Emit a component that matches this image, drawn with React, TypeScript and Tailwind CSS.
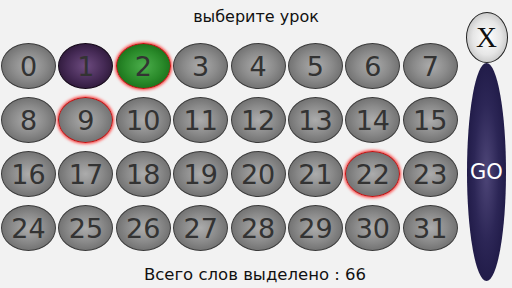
import React from "react";

const FONT = { fontFamily: '"DejaVu Sans", "Noto Sans", sans-serif' };

const GRAY =
  "border-[#3a3a3a] bg-[radial-gradient(ellipse_at_center,#acacac_0%,#8a8a8a_45%,#5a5a5a_100%)]";
const PURPLE =
  "border-[#140818] bg-[radial-gradient(ellipse_at_center,#6e4c80_0%,#452a55_50%,#1a0a22_100%)]";
const GREEN =
  "border-[#c81010] bg-[radial-gradient(ellipse_at_center,#4cae4c_0%,#2a8a2a_50%,#0c5a0c_100%)] shadow-[0_0_3px_1px_#ff4040]";
const MARKED =
  "border-[#c81010] shadow-[0_0_3px_1px_#ff4040] bg-[radial-gradient(ellipse_at_center,#acacac_0%,#8a8a8a_45%,#5a5a5a_100%)]";

function Lesson({ n }: { n: number }) {
  let cls = GRAY;
  if (n === 1) cls = PURPLE;
  else if (n === 2) cls = GREEN;
  else if (n === 9 || n === 22) cls = MARKED;

  return (
    <div
      className={`w-[55px] h-[46px] rounded-[50%] border flex items-center justify-center text-[27px] text-[#333] leading-none ${cls}`}
    >
      {n}
    </div>
  );
}

export default function App() {
  const lessons = Array.from({ length: 32 }, (_, i) => i);

  return (
    <div
      className="w-[512px] h-[288px] bg-[#f2f2f2] grid grid-cols-[461px_51px] grid-rows-[43px_208px_37px] overflow-hidden"
      style={FONT}
    >
      <div className="col-[1/-1] row-[1] flex justify-center pt-[7px] text-[16px] text-[#111] leading-5">
        выберите урок
      </div>

      <div className="col-[1] row-[2] pl-[1px] grid grid-cols-[repeat(8,55px)] grid-rows-[repeat(4,46px)] gap-x-[2.4px] gap-y-[8px]">
        {lessons.map((n) => (
          <Lesson key={n} n={n} />
        ))}
      </div>

      <div className="col-[1/-1] row-[3] flex justify-center pt-[14px] pr-[2px] text-[16.5px] text-[#111] leading-5">
        Всего слов выделено : 66
      </div>

      <div className="col-[2] row-[1/-1] flex flex-col items-center pt-[12px]">
        <div
          className="w-[42px] h-[51px] rounded-[50%] border border-[#222] bg-[radial-gradient(ellipse_at_center,#ffffff_0%,#e6e6e6_50%,#a8a8a8_100%)] flex items-center justify-center text-[29px] text-[#111] leading-none"
          style={{ fontFamily: '"Liberation Serif", "DejaVu Serif", serif' }}
        >
          X
        </div>
        <div className="w-[39px] h-[218px] rounded-[50%] bg-[radial-gradient(ellipse_at_center,#4e4678_0%,#2c2656_45%,#15103a_100%)] flex items-center justify-center text-white text-[21px] leading-none">
          GO
        </div>
      </div>
    </div>
  );
}
